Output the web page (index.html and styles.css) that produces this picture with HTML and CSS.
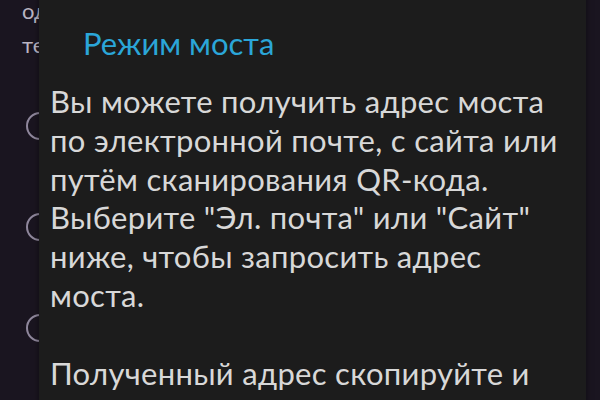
FILE: index.html
```html
<!DOCTYPE html>
<html lang="ru">
<head>
<meta charset="utf-8">
<link rel="stylesheet" href="styles.css">
</head>
<body>
<div class="screen">
  <div class="behind">
    <p class="bline">одно</p>
    <p class="bline">тест</p>
    <ul class="options">
      <li class="opt"><span class="radio"></span><span>Option</span></li>
      <li class="opt"><span class="radio"></span><span>Option</span></li>
      <li class="opt"><span class="radio"></span><span>Option</span></li>
    </ul>
  </div>
  <div class="dialog">
    <h1 class="title">Режим моста</h1>
    <p class="para">Вы можете получить адрес моста по электронной почте, с сайта или путём сканирования QR-кода. Выберите "Эл. почта" или "Сайт" ниже, чтобы запросить адрес моста.</p>
    <p class="para">Полученный адрес скопируйте и вставьте его в поле ниже.</p>
  </div>
</div>
</body>
</html>
```
FILE: styles.css
```css
html, body {
  margin: 0;
  padding: 0;
  width: 600px;
  height: 400px;
  overflow: hidden;
  background: #1a1520;
}
.screen {
  position: relative;
  width: 600px;
  height: 400px;
  overflow: hidden;
  font-family: Lato, "Noto Sans", sans-serif;
}
.behind {
  padding: 0 0 0 22px;
  color: #b9b4c2;
  font-size: 22px;
}
.bline {
  margin: 0;
  height: 34px;
  line-height: 34px;
}
.bline:first-child {
  margin-top: -6px;
}
.options {
  list-style: none;
  margin: 13px 0 0 0;
  padding: 0;
}
.opt {
  display: flex;
  align-items: center;
  gap: 12px;
  height: 101px;
}
.radio {
  width: 24px;
  height: 24px;
  margin-left: 4px;
  border: 2px solid #8f879c;
  border-radius: 50%;
}
.dialog {
  position: absolute;
  left: 39px;
  right: 14px;
  top: -20px;
  bottom: -60px;
  background: #1c1c1c;
  padding: 44px 8px 0 11px;
  box-shadow: 0 0 6px rgba(0,0,0,0.5);
}
.title {
  margin: 0 0 20px 33px;
  font-weight: 400;
  font-size: 31px;
  line-height: 38px;
  color: #2ba6d8;
}
.para {
  margin: 0 0 39px 0;
  font-size: 31px;
  line-height: 38.8px;
  letter-spacing: 0.3px;
  color: #d8d8d8;
}
```
